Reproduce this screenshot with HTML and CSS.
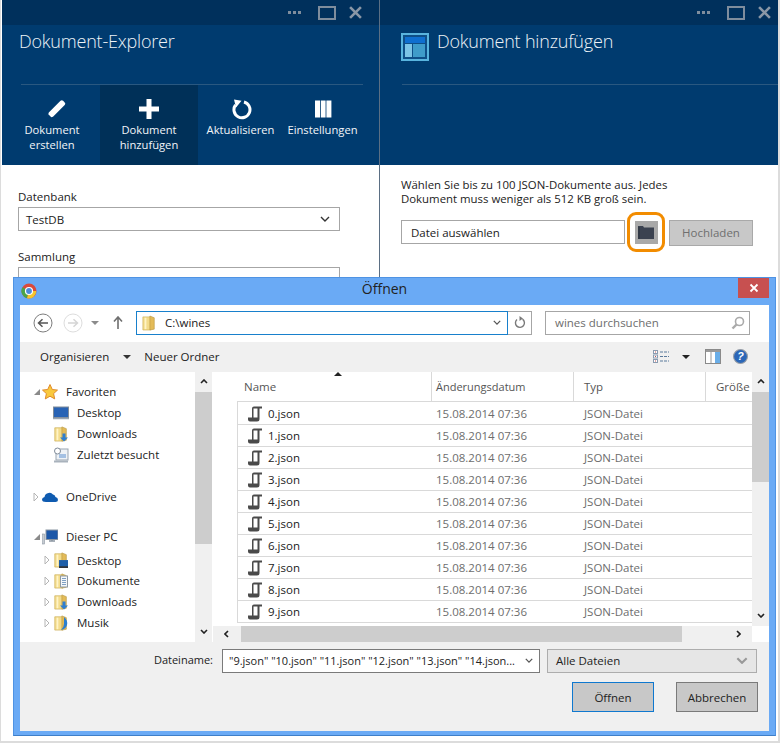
FILE: index.html
```html
<!DOCTYPE html>
<html lang="de">
<head>
<meta charset="utf-8">
<title>Dokument hinzufügen</title>
<link rel="stylesheet" href="styles.css">
</head>
<body>
<svg class="defs" width="0" height="0">
  <defs>
    <symbol id="fold" viewBox="0 0 16 18">
      <path d="M1 2h8l1 1v14H1z" fill="#f3dc8c" stroke="#c9a94f" stroke-width=".7"/>
      <path d="M9 1l5 2v13l-5 1z" fill="#e3bb58" stroke="#b8963f" stroke-width=".7"/>
      <path d="M4 3v13" stroke="#fff4c6" stroke-width="2"/>
    </symbol>
    <symbol id="down" viewBox="0 0 8 8"><path d="M2.500 0h3v4H8L4 8 0 4h2.500z" fill="#2f7fd0"/></symbol>
    <symbol id="tri-o" viewBox="0 0 6 10"><path d="M1 1l4 4-4 4z" fill="#fff" stroke="#b5b5b5"/></symbol>
    <symbol id="tri-f" viewBox="0 0 8 8"><path d="M7 1v6H1z" fill="#8a8a8a"/></symbol>
    <symbol id="doc" viewBox="0 0 14 16">
      <path d="M4 2.500q0-2 2-2H14v2h-2.500V13q0 2.500-2.500 2.500H2Q0 15.500 0 13.500v-2h4zM5.500 2.500v9h4v-9z" fill="#4a4a4a"/>
    </symbol>
    <symbol id="chev-d" viewBox="0 0 10 6"><path d="M1 1l4 4 4-4" fill="none" stroke="#555" stroke-width="1.600"/></symbol>
  </defs>
</svg>

<main class="page">
  <section class="blade blade-left">
    <div class="blade-bar">
      <span class="dots"></span>
      <span class="max"></span>
      <svg class="close" viewBox="0 0 12 12"><path d="M1 1l10 10M11 1L1 11" stroke="#8a97a6" stroke-width="2.400"/></svg>
    </div>
    <header class="blade-head">
      <h1 class="blade-title">Dokument-Explorer</h1>
      <div class="rule rule-left"></div>
      <nav class="commands">
        <button class="cmd cmd-create">
          <svg class="cmd-icon icon-pencil" viewBox="0 0 22 22"><path d="M2 20.500l1.800-6L15.500 2.800q1.300-1.300 2.600 0l1.600 1.600q1.300 1.300 0 2.600L8 18.700zM2 20.500l4.300-1.200-3-3z" fill="#fff"/></svg>
          <span>Dokument<br>erstellen</span>
        </button>
        <button class="cmd cmd-add">
          <svg class="cmd-icon" viewBox="0 0 22 22"><path d="M8.500 1h5v7.500H21v5h-7.500V21h-5v-7.500H1v-5h7.500z" fill="#fff"/></svg>
          <span>Dokument<br>hinzufügen</span>
        </button>
        <button class="cmd cmd-refresh">
          <svg class="cmd-icon" viewBox="0 0 22 22"><path d="M5.500 7A8 8 0 1 0 14 4" fill="none" stroke="#fff" stroke-width="3"/><path d="M4 1.500l7.500 1.200L6 9.500z" fill="#fff"/></svg>
          <span>Aktualisieren</span>
        </button>
        <button class="cmd cmd-settings">
          <svg class="cmd-icon" viewBox="0 0 22 22"><path d="M3 2.500h5v17H3zM8.800 2.500h4.800v17H8.800zM14.400 2.500h5v17h-5z" fill="#fff"/></svg>
          <span>Einstellungen</span>
        </button>
      </nav>
    </header>
    <div class="blade-body">
      <label class="field-label">Datenbank</label>
      <div class="select"><span>TestDB</span><svg class="sel-chev" viewBox="0 0 10 6"><path d="M1 1l4 4 4-4" fill="none" stroke="#333" stroke-width="1.400"/></svg></div>
      <label class="field-label field-second">Sammlung</label>
      <div class="select"></div>
    </div>
  </section>

  <section class="blade blade-right">
    <div class="blade-bar">
      <span class="dots"></span>
      <span class="max"></span>
      <svg class="close" viewBox="0 0 12 12"><path d="M1 1l10 10M11 1L1 11" stroke="#8a97a6" stroke-width="2.400"/></svg>
    </div>
    <header class="blade-head">
      <div class="title-row">
        <svg class="tile" viewBox="0 0 28 28">
          <rect x="1" y="1" width="26" height="26" fill="#0e4f88" stroke="#59b4de" stroke-width="2"/>
          <rect x="4" y="4" width="20" height="6" fill="#0f6fd0"/>
          <rect x="4" y="11" width="7" height="13" fill="#7cc4e6"/>
          <rect x="12" y="11" width="12" height="13" fill="#3f9cca"/>
        </svg>
        <h1 class="blade-title">Dokument hinzufügen</h1>
      </div>
      <div class="rule rule-right"></div>
    </header>
    <div class="blade-body body-right">
      <p class="hint">Wählen Sie bis zu 100 JSON-Dokumente aus. Jedes<br>Dokument muss weniger als 512 KB groß sein.</p>
      <div class="upload-row">
        <div class="file-input">Datei auswählen</div>
        <div class="ring"><div class="folder-btn">
          <svg class="folder-ico" viewBox="0 0 16 13"><path d="M0 0h5l1 1.500h10V13H0z" fill="#3b4250"/><path d="M1 1v12" stroke="#2a303b"/></svg>
        </div></div>
        <div class="upload-btn">Hochladen</div>
      </div>
    </div>
  </section>

  <div class="dialog">
    <div class="dlg-title">
      <svg class="chrome" viewBox="0 0 16 16">
        <circle cx="8" cy="8" r="7.500" fill="#d9493c"/>
        <path d="M8 8L1.500 4.200A7.500 7.500 0 0 0 6 15.300z" fill="#4aa54a"/>
        <path d="M8 8h7.300A7.500 7.500 0 0 1 6 15.300z" fill="#f3c62f"/>
        <circle cx="8" cy="8" r="3.500" fill="#4b8bdb" stroke="#fff" stroke-width="1.200"/>
      </svg>
      <span class="dlg-name">Öffnen</span>
      <div class="dlg-close"><svg viewBox="0 0 10 10"><path d="M1.500 1.500l7 7M8.500 1.500l-7 7" stroke="#fff" stroke-width="1.800"/></svg></div>
    </div>
    <div class="dlg-inner">
      <div class="nav">
        <svg class="nav-round" viewBox="0 0 20 20"><circle cx="10" cy="10" r="9" fill="#fff" stroke="#7d7d7d"/><path d="M15 10H6M9.500 6.200L5.500 10l4 3.800" fill="none" stroke="#555" stroke-width="1.500"/></svg>
        <svg class="nav-round nav-off" viewBox="0 0 20 20"><circle cx="10" cy="10" r="9" fill="#fff" stroke="#ddd"/><path d="M5 10h9M10.500 6.200l4 3.800-4 3.800" fill="none" stroke="#d5d5d5" stroke-width="1.500"/></svg>
        <svg class="nav-tri" viewBox="0 0 8 4"><path d="M0 0h8L4 4z" fill="#8b8b8b"/></svg>
        <svg class="nav-up" viewBox="0 0 10 13"><path d="M5 13V2M1 5.500L5 1l4 4.500" fill="none" stroke="#6f6f6f" stroke-width="1.600"/></svg>
        <div class="addr">
          <svg class="addr-fold"><use href="#fold"/></svg>
          <span class="addr-text">C:\wines</span>
          <svg class="addr-chev"><use href="#chev-d"/></svg>
        </div>
        <div class="refresh"><svg viewBox="0 0 12 13"><path d="M3 3.500a4.500 4.500 0 1 0 5.500-.3" fill="none" stroke="#7a7a7a" stroke-width="1.400"/><path d="M5.500 0v5L9 2.500z" fill="#7a7a7a"/></svg></div>
        <div class="search">
          <span>wines durchsuchen</span>
          <svg viewBox="0 0 14 14"><circle cx="8.500" cy="5.500" r="4" fill="none" stroke="#aaa" stroke-width="1.600"/><path d="M5.500 8.500L1.500 12.500" stroke="#aaa" stroke-width="2.400"/></svg>
        </div>
      </div>

      <div class="toolbar">
        <span class="tb-org">Organisieren</span>
        <svg class="tb-tri tb-tri-a" viewBox="0 0 8 4"><path d="M0 0h8L4 4z" fill="#333"/></svg>
        <span class="tb-new">Neuer Ordner</span>
        <svg class="tb-list" viewBox="0 0 16 13"><path d="M7 2h9M7 6.500h9M7 11h9" fill="none" stroke="#5b7a9c" stroke-dasharray="3 1"/><g fill="#fff" stroke="#8a9bb0"><rect x=".5" y=".5" width="4" height="3"/><rect x=".5" y="5" width="4" height="3"/><rect x=".5" y="9.500" width="4" height="3"/></g><path d="M2 2h1M2 6.500h1M2 11h1" stroke="#c0504d"/></svg>
        <svg class="tb-tri tb-tri-b" viewBox="0 0 8 4"><path d="M0 0h8L4 4z" fill="#222"/></svg>
        <svg class="tb-pane" viewBox="0 0 16 15"><rect x=".5" y=".5" width="15" height="14" fill="#fff" stroke="#8a8a8a"/><rect x="1" y="1" width="14" height="2" fill="#9a9a9a"/><path d="M6 3v11" stroke="#9a9a9a"/><rect x="10" y="3" width="5" height="11" fill="#6aaee8"/></svg>
        <svg class="tb-help" viewBox="0 0 14 14"><circle cx="7" cy="7" r="6.500" fill="#2b67b8" stroke="#9a9fa6"/><text x="7" y="10.500" class="help-q" text-anchor="middle">?</text></svg>
      </div>

      <div class="browser">
        <aside class="tree">
          <div class="tree-list">
            <div class="ti ti-top"><svg class="arrow-f"><use href="#tri-f"/></svg>
              <svg class="ti-ico" viewBox="0 0 16 16"><path d="M8 .5l2.300 5 5.200.6-3.900 3.500 1.100 5.300L8 12.200l-4.700 2.700 1.100-5.300L.5 6.100l5.200-.6z" fill="#f9c93d" stroke="#e08a2c"/></svg>Favoriten</div>
            <div class="ti ti-sub ti-s1"><svg class="ti-ico" viewBox="0 0 16 14"><rect x=".5" y="1" width="15" height="10.500" fill="#2863b5" stroke="#7f8b99"/><path d="M0 12.500h16" stroke="#9aa5b1" stroke-width="1.500"/></svg>Desktop</div>
            <div class="ti ti-sub"><span class="fold-wrap"><svg class="ti-ico"><use href="#fold"/></svg><svg class="badge"><use href="#down"/></svg></span>Downloads</div>
            <div class="ti ti-sub"><svg class="ti-ico" viewBox="0 0 16 16"><rect x="3" y="2" width="12" height="11" fill="#eef2f6" stroke="#9aa5b1"/><circle cx="4.500" cy="4" r="3" fill="#fff" stroke="#7f8b99"/><path d="M6 8h7M6 10h7" stroke="#5b8fd0"/><path d="M1 14.500h14" stroke="#a9b2bc" stroke-width="2"/></svg>Zuletzt besucht</div>
            <div class="ti ti-top ti-gap-a"><svg class="arrow-o"><use href="#tri-o"/></svg>
              <svg class="ti-ico" viewBox="0 0 16 10"><path d="M4 10Q0 10 0 7.500 0 5.500 2.500 5 3 1.500 6.500 1 9 0 11 2.500 13 2.500 13.500 5 16 5.500 16 8 16 10 13.500 10z" fill="#0f5bb0"/></svg>OneDrive</div>
            <div class="ti ti-top ti-gap-b"><svg class="arrow-f"><use href="#tri-f"/></svg>
              <svg class="ti-ico" viewBox="0 0 16 16"><rect x="4" y="1" width="12" height="9.500" fill="#1c57a8" stroke="#8a95a1"/><path d="M7 12h6M10 10.500V12" stroke="#8a95a1" stroke-width="1.500"/><rect x="0" y="5" width="2.500" height="10" fill="#c7ccd2" stroke="#8a95a1" stroke-width=".6"/></svg>Dieser PC</div>
            <div class="ti ti-child ti-first"><svg class="arrow-o"><use href="#tri-o"/></svg><span class="fold-wrap"><svg class="ti-ico"><use href="#fold"/></svg><svg class="badge badge-sq" viewBox="0 0 8 7"><rect width="8" height="7" fill="#1f5fa8"/><rect y="5.500" width="8" height="1.500" fill="#333"/></svg></span>Desktop</div>
            <div class="ti ti-child"><svg class="arrow-o"><use href="#tri-o"/></svg><span class="fold-wrap"><svg class="ti-ico"><use href="#fold"/></svg><svg class="badge badge-doc" viewBox="0 0 8 12"><rect x=".5" y=".5" width="7" height="11" fill="#f4f7fa" stroke="#8f99a4"/><path d="M2 3h4M2 5h4M2 7h4M2 9h4" stroke="#7fa0c4"/></svg></span>Dokumente</div>
            <div class="ti ti-child"><svg class="arrow-o"><use href="#tri-o"/></svg><span class="fold-wrap"><svg class="ti-ico"><use href="#fold"/></svg><svg class="badge"><use href="#down"/></svg></span>Downloads</div>
            <div class="ti ti-child"><svg class="arrow-o"><use href="#tri-o"/></svg><span class="fold-wrap"><svg class="ti-ico"><use href="#fold"/></svg><svg class="badge badge-mus" viewBox="0 0 7 13"><path d="M3 0q4 3 3 8-1 4-6 5 3-3 3-6z" fill="#2b7fd0"/></svg></span>Musik</div>
          </div>
          <div class="vscroll vscroll-tree">
            <svg class="sb-arrow" viewBox="0 0 8 5"><path d="M1 4l3-3 3 3" fill="none" stroke="#222" stroke-width="1.600"/></svg>
            <div class="track"><div class="thumb thumb-tree"></div></div>
            <svg class="sb-arrow" viewBox="0 0 8 5"><path d="M1 1l3 3 3-3" fill="none" stroke="#222" stroke-width="1.600"/></svg>
          </div>
        </aside>

        <div class="files">
          <div class="files-main">
            <div class="files-view">
              <div class="fhead">
                <svg class="sort" viewBox="0 0 8 4"><path d="M4 0l4 4H0z" fill="#222"/></svg>
                <div class="col c-name">Name</div>
                <div class="col c-date">Änderungsdatum</div>
                <div class="col c-type">Typ</div>
                <div class="col c-size">Größe</div>
              </div>
              <div class="rows">
                <div class="row"><svg class="doc"><use href="#doc"/></svg><span class="r-name">0.json</span><span class="r-date">15.08.2014 07:36</span><span class="r-type">JSON-Datei</span></div>
                <div class="row"><svg class="doc"><use href="#doc"/></svg><span class="r-name">1.json</span><span class="r-date">15.08.2014 07:36</span><span class="r-type">JSON-Datei</span></div>
                <div class="row"><svg class="doc"><use href="#doc"/></svg><span class="r-name">2.json</span><span class="r-date">15.08.2014 07:36</span><span class="r-type">JSON-Datei</span></div>
                <div class="row"><svg class="doc"><use href="#doc"/></svg><span class="r-name">3.json</span><span class="r-date">15.08.2014 07:36</span><span class="r-type">JSON-Datei</span></div>
                <div class="row"><svg class="doc"><use href="#doc"/></svg><span class="r-name">4.json</span><span class="r-date">15.08.2014 07:36</span><span class="r-type">JSON-Datei</span></div>
                <div class="row"><svg class="doc"><use href="#doc"/></svg><span class="r-name">5.json</span><span class="r-date">15.08.2014 07:36</span><span class="r-type">JSON-Datei</span></div>
                <div class="row"><svg class="doc"><use href="#doc"/></svg><span class="r-name">6.json</span><span class="r-date">15.08.2014 07:36</span><span class="r-type">JSON-Datei</span></div>
                <div class="row"><svg class="doc"><use href="#doc"/></svg><span class="r-name">7.json</span><span class="r-date">15.08.2014 07:36</span><span class="r-type">JSON-Datei</span></div>
                <div class="row"><svg class="doc"><use href="#doc"/></svg><span class="r-name">8.json</span><span class="r-date">15.08.2014 07:36</span><span class="r-type">JSON-Datei</span></div>
                <div class="row"><svg class="doc"><use href="#doc"/></svg><span class="r-name">9.json</span><span class="r-date">15.08.2014 07:36</span><span class="r-type">JSON-Datei</span></div>
              </div>
            </div>
            <div class="vscroll vscroll-files">
              <svg class="sb-arrow" viewBox="0 0 8 5"><path d="M1 4l3-3 3 3" fill="none" stroke="#222" stroke-width="1.600"/></svg>
              <div class="track"><div class="thumb thumb-files"></div></div>
              <svg class="sb-arrow" viewBox="0 0 8 5"><path d="M1 1l3 3 3-3" fill="none" stroke="#222" stroke-width="1.600"/></svg>
            </div>
          </div>
          <div class="hscroll">
            <svg class="sb-h" viewBox="0 0 5 8"><path d="M4 1L1 4l3 3" fill="none" stroke="#222" stroke-width="1.600"/></svg>
            <div class="htrack"><div class="hthumb"></div></div>
            <svg class="sb-h" viewBox="0 0 5 8"><path d="M1 1l3 3-3 3" fill="none" stroke="#222" stroke-width="1.600"/></svg>
          </div>
        </div>
      </div>

      <div class="bottom">
        <div class="name-row">
          <label class="name-label">Dateiname:</label>
          <div class="name-input"><span>"9.json" "10.json" "11.json" "12.json" "13.json" "14.json...</span><svg class="name-chev"><use href="#chev-d"/></svg></div>
          <div class="type-select"><span>Alle Dateien</span><svg viewBox="0 0 10 6"><path d="M1 1l4 4 4-4" fill="none" stroke="#999" stroke-width="1.800"/></svg></div>
        </div>
        <div class="btn-row">
          <div class="btn btn-primary">Öffnen</div>
          <div class="btn">Abbrechen</div>
        </div>
      </div>
    </div>
  </div>
</main>
</body>
</html>
```

FILE: styles.css
```css
* { box-sizing: border-box; }
html, body { margin: 0; padding: 0; }
body {
  width: 780px;
  height: 743px;
  overflow: hidden;
  font-family: "Open Sans", "Noto Sans", sans-serif;
  font-size: 11.5px;
  color: #222;
  background: #fff;
}
.defs { position: absolute; }
.page {
  position: relative;
  display: flex;
  width: 780px;
  height: 743px;
  padding-left: 1px;
  border-left: 1px solid #dcdcdc;
  border-right: 2px solid #dcdcdc;
  border-bottom: 2px solid #dcdcdc;
  overflow: hidden;
}
.blade { display: flex; flex-direction: column; height: 290px; }
.blade-left { width: 378px; border-right: 1px solid #5b6f84; flex: none; }
.blade-right { flex: 1; min-width: 0; }
.blade-bar {
  height: 25px;
  background: #00305c;
  display: flex;
  align-items: center;
  justify-content: flex-end;
  padding-right: 17px;
  flex: none;
}
.blade-right .blade-bar { padding-right: 7px; }
.dots {
  width: 13px;
  height: 3px;
  margin-right: 17px;
  background: repeating-linear-gradient(90deg, #7f8d9d 0 3px, transparent 3px 5px);
}
.max { width: 18px; height: 14px; border: 2px solid #7f8d9d; margin-right: 13px; }
.close { width: 13px; height: 13px; }
.blade-head { height: 140px; background: #003b6f; flex: none; color: #fff; }
.blade-title { margin: 0; font-size: 18px; font-weight: 300; line-height: 24px; color: #eef3f8; letter-spacing: -.2px; }
.blade-left .blade-title { padding: 4px 0 0 17px; }
.rule { height: 1px; background: #2a5880; }
.rule-left { margin: 31px 16px 0 19px; width: 342px; }
.rule-right { margin: 0 0 0 22px; }
.title-row { display: flex; align-items: flex-start; padding: 8px 0 0 21px; height: 59px; }
.title-row .blade-title { padding: 0 0 0 8px; margin-top: -4px; }
.tile { width: 28px; height: 28px; flex: none; }
.commands { display: flex; height: 80px; }
.cmd {
  background: none;
  border: 0;
  padding: 13px 0 0;
  color: #f2f5f8;
  font: inherit;
  font-size: 11.2px;
  line-height: 15px;
  display: flex;
  flex-direction: column;
  align-items: center;
  text-align: center;
  white-space: nowrap;
}
.cmd-create { width: 98px; padding-left: 2px; }
.cmd-add { width: 98px; background: #003058; }
.cmd-refresh { width: 85px; }
.cmd-settings { width: 79px; }
.cmd-icon { width: 22px; height: 22px; margin-bottom: 2px; flex: none; }
.icon-pencil { margin-left: 8px; }
.blade-body { flex: 1; background: #fff; }
.blade-left .blade-body { padding: 24px 0 0 16px; }
.field-label { display: block; font-size: 11.5px; line-height: 15px; color: #222; }
.field-second { margin-top: 18px; }
.select {
  width: 322px;
  height: 24px;
  margin-top: 3px;
  border: 1px solid #a6a6a6;
  display: flex;
  align-items: center;
  justify-content: space-between;
  padding: 0 9px 0 7px;
}
.sel-chev { width: 10px; height: 6px; }
.body-right { padding: 13px 0 0 21px; }
.hint { margin: 0; font-size: 11.4px; line-height: 14px; color: #222; }
.upload-row { display: flex; align-items: flex-start; margin-top: 14px; }
.file-input {
  width: 224px;
  height: 24px;
  border: 1px solid #a6a6a6;
  padding-left: 9px;
  line-height: 23px;
  flex: none;
}
.ring {
  width: 38px;
  height: 40px;
  margin: -8px 0 0 2px;
  border: 3px solid #f28c00;
  border-radius: 9px;
  display: flex;
  align-items: center;
  justify-content: center;
  flex: none;
}
.folder-btn {
  width: 23px;
  height: 23px;
  background: #a9a9a9;
  display: flex;
  align-items: center;
  justify-content: center;
}
.folder-ico { width: 16px; height: 13px; }
.upload-btn {
  width: 84px;
  height: 26px;
  margin-left: 4px;
  background: #c8c8c8;
  border: 1px solid #a9a9a9;
  color: #6f6f6f;
  text-align: center;
  line-height: 24px;
}

.dialog {
  position: absolute;
  left: 12px;
  top: 277px;
  width: 763px;
  height: 459px;
  background: #6aaaf5;
  border: 1px solid #4f93e3;
  border-bottom-color: #3f7fc8;
  display: flex;
  flex-direction: column;
}
.dlg-title {
  height: 27px;
  display: flex;
  align-items: flex-start;
  justify-content: center;
  padding-right: 20px;
  position: relative;
  flex: none;
}
.chrome { position: absolute; left: 7px; top: 5px; width: 16px; height: 16px; }
.dlg-name { font-size: 14px; color: #222; line-height: 22px; }
.dlg-close {
  position: absolute;
  right: 6px;
  top: 0;
  width: 31px;
  height: 20px;
  background: #c75050;
  display: flex;
  align-items: center;
  justify-content: center;
}
.dlg-close svg { width: 10px; height: 10px; }
.dlg-inner {
  flex: 1;
  margin: 0 6px 4px;
  background: #f0f0f0;
  display: flex;
  flex-direction: column;
  min-height: 0;
}
.nav {
  height: 37px;
  background: #fff;
  display: flex;
  align-items: center;
  padding: 0 0 2px 13px;
  flex: none;
}
.nav-round { width: 20px; height: 20px; flex: none; }
.nav-off { margin-left: 10px; }
.nav-tri { width: 8px; height: 4px; margin-left: 8px; }
.nav-up { width: 10px; height: 13px; margin-left: 14px; }
.addr {
  width: 372px;
  height: 24px;
  margin-left: 13px;
  border: 1px solid #1880cc;
  display: flex;
  align-items: center;
  padding-left: 5px;
  flex: none;
}
.addr-fold { width: 14px; height: 16px; flex: none; }
.addr-text { margin-left: 9px; flex: 1; }
.addr-chev { width: 8px; height: 5px; margin-right: 6px; }
.refresh {
  width: 24px;
  height: 24px;
  border: 1px solid #a6a6a6;
  border-left: 0;
  display: flex;
  align-items: center;
  justify-content: center;
  flex: none;
}
.refresh svg { width: 12px; height: 13px; }
.search {
  width: 205px;
  height: 24px;
  margin-left: 13px;
  border: 1px solid #a6a6a6;
  display: flex;
  align-items: center;
  justify-content: space-between;
  padding: 0 4px 0 9px;
  color: #6d6d6d;
  flex: none;
}
.search svg { width: 14px; height: 14px; }
.toolbar {
  height: 30px;
  background: #f0f0f0;
  display: flex;
  align-items: center;
  padding: 0 0 1px 20px;
  flex: none;
}
.tb-tri { width: 8px; height: 4px; flex: none; }
.tb-tri-a { margin-left: 14px; }
.tb-new { margin-left: 13px; }
.tb-list { width: 16px; height: 13px; margin-left: auto; flex: none; }
.tb-tri-b { margin-left: 13px; }
.tb-pane { width: 16px; height: 15px; margin-left: 15px; flex: none; }
.tb-help { width: 15px; height: 15px; margin: 0 21px 0 12px; flex: none; }
.help-q { font-size: 10px; font-weight: 700; font-style: italic; fill: #fff; font-family: "Liberation Sans", sans-serif; }
.browser { height: 270px; display: flex; background: #fff; flex: none; }
.tree { width: 192px; display: flex; flex: none; }
.tree-list { width: 175px; padding-top: 9px; overflow: hidden; flex: none; }
.ti { height: 21px; display: flex; align-items: center; white-space: nowrap; }
.ti-top { padding-left: 13px; }
.ti-gap-a { margin-top: 21px; }
.ti-gap-b { margin-top: 19px; }
.ti-first { height: 20px; margin-top: 3px; }
.ti-sub { padding-left: 33px; }
.ti-child { padding-left: 24px; }
.ti-ico { width: 16px; height: 16px; margin-right: 8px; flex: none; }
.ti-top .ti-ico { margin-right: 8px; }
.arrow-f { width: 8px; height: 8px; margin-right: 1px; flex: none; }
.arrow-o { width: 6px; height: 10px; margin-right: 3px; flex: none; }
.fold-wrap { position: relative; display: flex; flex: none; }
.badge { position: absolute; left: 7px; top: 7px; width: 8px; height: 9px; }
.badge-sq { left: 6px; top: 8px; width: 9px; height: 8px; }
.badge-doc { left: 7px; top: 2px; width: 8px; height: 13px; }
.badge-mus { left: 8px; top: 2px; width: 7px; height: 13px; }
.vscroll {
  width: 17px;
  background: #f0f0f0;
  display: flex;
  flex-direction: column;
  align-items: center;
  flex: none;
}
.sb-arrow { width: 8px; height: 5px; margin: 7px 0 8px; flex: none; }
.track { flex: 1; width: 100%; position: relative; }
.thumb { width: 100%; background: #cdcdcd; }
.thumb-tree { height: 152px; }
.thumb-files { height: 90px; }
.files { flex: 1; min-width: 0; display: flex; flex-direction: column; }
.files-main { flex: 1; min-height: 0; display: flex; }
.files-view { flex: 1; min-width: 0; overflow: hidden; display: flex; flex-direction: column; }
.fhead { height: 29px; display: grid; grid-template-columns: 220px 142px 132px 1fr; position: relative; flex: none; color: #555; }
.sort { position: absolute; left: 122px; top: 0; width: 8px; height: 4px; }
.col { border-right: 1px solid #d9d9d9; line-height: 29px; padding-left: 4px; white-space: nowrap; overflow: hidden; }
.c-name { padding-left: 32px; }
.c-date { font-size: 11px; }
.c-type { padding-left: 10px; }
.c-size { border-right: 0; padding-left: 10px; }
.rows { margin-left: 25px; padding-top: 1px; flex: none; border-top: 1px solid #d9d9d9; border-left: 1px solid #d9d9d9; }
.row {
  height: 22px;
  border-bottom: 1px solid #d9d9d9;
  display: grid;
  grid-template-columns: 30px 168px 148px 1fr;
  align-items: center;
  white-space: nowrap;
}
.doc { width: 14px; height: 16px; margin-left: 10px; }
.r-name { color: #222; }
.r-date, .r-type { color: #6d6d6d; }
.hscroll { height: 16px; background: #f0f0f0; display: flex; align-items: center; flex: none; margin-right: 17px; margin-left: 1px; }
.sb-h { width: 5px; height: 8px; margin: 0 11px; flex: none; }
.htrack { flex: 1; height: 100%; padding-left: 1px; }
.hthumb { width: 441px; height: 100%; background: #cdcdcd; }
.bottom { flex: 1; padding: 7px 12px 0 0; display: flex; flex-direction: column; }
.name-row { display: flex; align-items: center; }
.name-label { width: 202px; text-align: right; padding: 0 9px 4px 0; flex: none; color: #222; font-size: 11px; }
.name-input {
  width: 318px;
  height: 24px;
  background: #fff;
  border: 1px solid #7a7a7a;
  padding: 0 6px 2px;
  display: flex;
  align-items: center;
  justify-content: space-between;
  white-space: nowrap;
  flex: none;
  font-size: 11px;
}
.name-chev { width: 8px; height: 5px; flex: none; }
.type-select {
  width: 210px;
  height: 24px;
  margin-left: 7px;
  background: #e6e6e6;
  border: 1px solid #adadad;
  display: flex;
  align-items: center;
  justify-content: space-between;
  padding: 0 8px 2px;
  flex: none;
}
.type-select svg { width: 12px; height: 7px; }
.btn-row { display: flex; justify-content: flex-end; gap: 22px; margin: 9px -1px 0 0; }
.btn {
  width: 82px;
  height: 30px;
  background: #c8c8c8;
  border: 1px solid #7a7a7a;
  text-align: center;
  line-height: 29px;
  color: #222;
}
.btn-primary { border-color: #0f78cf; }
```
